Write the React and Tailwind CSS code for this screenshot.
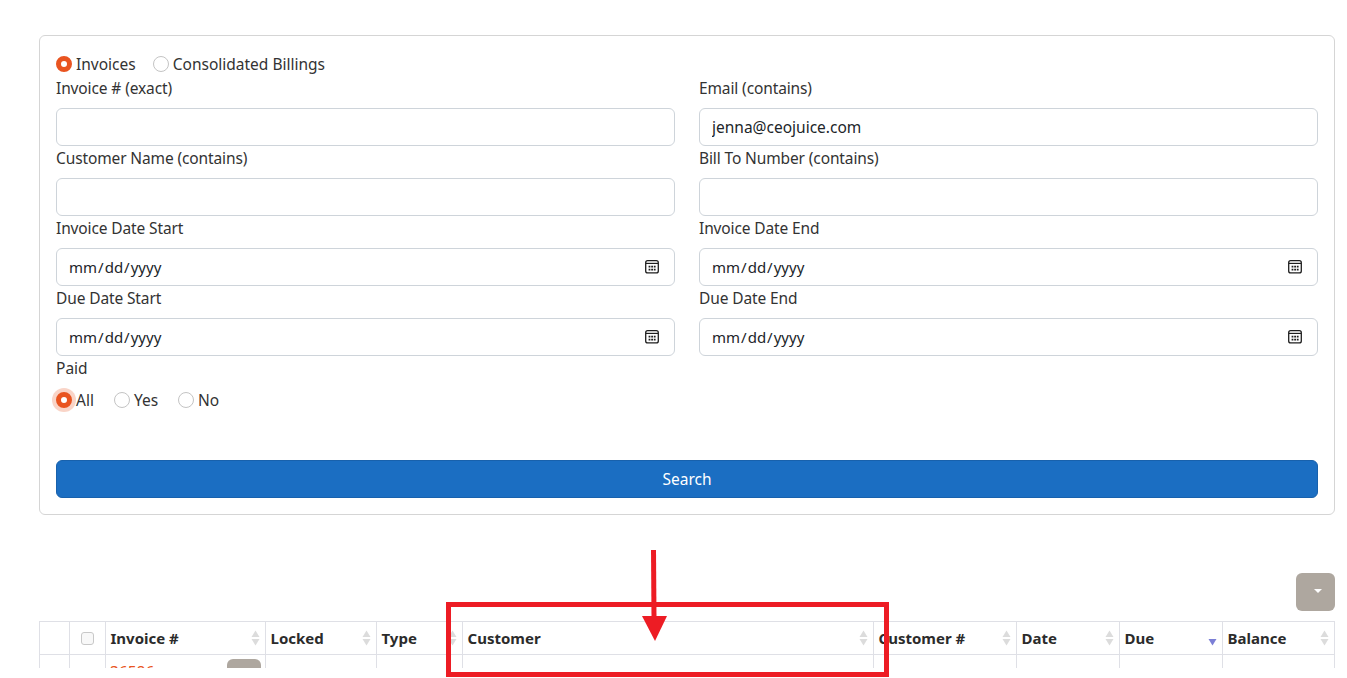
const CalendarIcon = () => (
  <svg width="16" height="16" viewBox="0 0 16 16" className="pointer-events-none absolute right-[15px] top-[11px]">
    <rect x="1.7" y="1.7" width="12.6" height="12.2" rx="2" fill="none" stroke="#1f1f1f" strokeWidth="1.3" />
    <path d="M2 4.4H14" stroke="#1f1f1f" strokeWidth="1.2" />
    <path d="M4.6 6.8h1.8v1.8H4.6zM7.2 6.8h1.8v1.8H7.2zM9.8 6.8h1.8v1.8H9.8zM4.6 9.8h1.8v1.8H4.6zM7.2 9.8h1.8v1.8H7.2zM9.8 9.8h1.8v1.8H9.8z" fill="#1f1f1f" />
  </svg>
);

const Field = ({ label, type = "text", value = "" }) => (
  <div className="flex flex-col">
    <label className="h-8 leading-[24px] tracking-[-0.12px]">{label}</label>
    {type === "date" ? (
      <div className="relative">
        <input
          type="date"
          className="h-[38px] w-full rounded-[6px] border border-[#ced4da] bg-white pl-[11px] pr-3 text-[15px] text-[#212529] outline-none [&::-webkit-calendar-picker-indicator]:opacity-0"
        />
        <CalendarIcon />
      </div>
    ) : (
      <input
        type={type}
        defaultValue={value}
        className="h-[38px] w-full rounded-[6px] border border-[#ced4da] bg-white px-3 text-[#212529] outline-none"
      />
    )}
  </div>
);

const Radio = ({ label, checked, focus, name }) => (
  <label className="flex items-center gap-[4px]">
    <input
      type="radio"
      name={name}
      defaultChecked={checked}
      className={
        "h-4 w-4 appearance-none rounded-full " +
        (checked ? "border-[5px] border-[#e95420] bg-white " : "border border-[#c4c4c4] bg-white ") +
        (focus ? "shadow-[0_0_0_4px_rgba(233,84,32,0.25)]" : "")
      }
    />
    <span>{label}</span>
  </label>
);

const Sort = ({ active }) => (
  <svg width="9" height="16" viewBox="0 0 9 16" className="absolute right-[5px] top-[8px]">
    {!active && <path d="M4.5 0.5L8.5 7H0.5Z" fill="#dcdcdc" />}
    <path d="M4.5 15.5L8.5 9H0.5Z" fill={active ? "#7b7fd6" : "#dcdcdc"} />
  </svg>
);

const cols = [
  ["", 30, false],
  ["", 36, false],
  ["Invoice #", 160, true],
  ["Locked", 111, true],
  ["Type", 86, true],
  ["Customer", 411, true],
  ["Customer #", 143, true],
  ["Date", 103, true],
  ["Due", 103, true],
  ["Balance", 112, true],
];

export default function App() {
  return (
    <div className="relative h-[678px] overflow-hidden bg-white text-[15.5px] text-[#333] [font-family:'Noto_Sans',sans-serif]">
      <div className="h-[668px] overflow-hidden pl-[39px] pr-[12px] pt-[35px]">
        <div className="h-[480px] rounded-[6px] border border-[#d5d5d5] px-4 pt-4">
          <div className="flex h-6 items-center gap-[17px] leading-[24px]">
            <Radio name="kind" label="Invoices" checked />
            <Radio name="kind" label="Consolidated Billings" />
          </div>
          <div className="grid grid-cols-2 gap-x-6">
            <Field label="Invoice # (exact)" />
            <Field label="Email (contains)" value="jenna@ceojuice.com" />
            <Field label="Customer Name (contains)" />
            <Field label="Bill To Number (contains)" />
            <Field label="Invoice Date Start" type="date" />
            <Field label="Invoice Date End" type="date" />
            <Field label="Due Date Start" type="date" />
            <Field label="Due Date End" type="date" />
          </div>
          <div className="h-8 leading-[24px]">Paid</div>
          <div className="flex h-[72px] items-start gap-5 leading-[24px]">
            <Radio name="paid" label="All" checked focus />
            <Radio name="paid" label="Yes" />
            <Radio name="paid" label="No" />
          </div>
          <button className="h-[38px] w-full rounded-[6px] border border-[#1861ac] bg-[#1b6ec2] pt-[1px] text-white">Search</button>
        </div>

        <div className="mt-[58px] flex justify-end">
          <button className="flex h-[38px] w-[39px] items-center justify-center rounded-[6px] bg-[#aea79f] pb-[2px] pl-[5px]">
            <span className="h-0 w-0 border-x-[4px] border-t-[4px] border-x-transparent border-t-white" />
          </button>
        </div>

        <table className="mt-[10px] w-[1296px] table-fixed border-collapse border border-[#dfe0e6]">
          <colgroup>
            {cols.map(([label, width], i) => (
              <col key={i} style={{ width }} />
            ))}
          </colgroup>
          <thead>
            <tr className="h-[33px]">
              {cols.map(([label, , sort], i) => (
                <th key={i} className="relative border border-[#dfe0e6] pl-[4.5px] pt-[1px] text-left text-[15px] font-bold text-[#2b2b2b]">
                  {i === 1 && (
                    <span className="ml-[6px] block h-[13px] w-[13px] rounded-[3px] border border-[#c8c8c8] bg-[#f8f8f8]" />
                  )}
                  {label}
                  {sort && <Sort active={label === "Due"} />}
                </th>
              ))}
            </tr>
          </thead>
          <tbody>
            <tr>
              <td className="border border-[#dfe0e6]"></td>
              <td className="border border-[#dfe0e6]"></td>
              <td className="relative h-[40px] border border-[#dfe0e6] pl-1 align-top">
                <span className="mt-[6px] block text-[#e95420]">36586</span>
                <span className="absolute left-[88px] top-[13px] h-[2px] w-[8px] bg-[#555]" />
                <span className="absolute left-[121px] top-[4px] h-[34px] w-[34px] rounded-[6px] bg-[#aea79f]" />
              </td>
              {[0, 1, 2, 3, 4, 5, 6].map((i) => (
                <td key={i} className="border border-[#dfe0e6]"></td>
              ))}
            </tr>
          </tbody>
        </table>
      </div>

      <svg className="pointer-events-none absolute left-0 top-0" width="1347" height="678">
        <rect x="448.5" y="604.5" width="438" height="70" fill="none" stroke="#ed1c24" strokeWidth="5" />
        <path d="M651 550L656 550L656.5 618L651.5 618Z" fill="#ed1c24" />
        <path d="M642 616L667 616L655 641Z" fill="#ed1c24" />
      </svg>
    </div>
  );
}
